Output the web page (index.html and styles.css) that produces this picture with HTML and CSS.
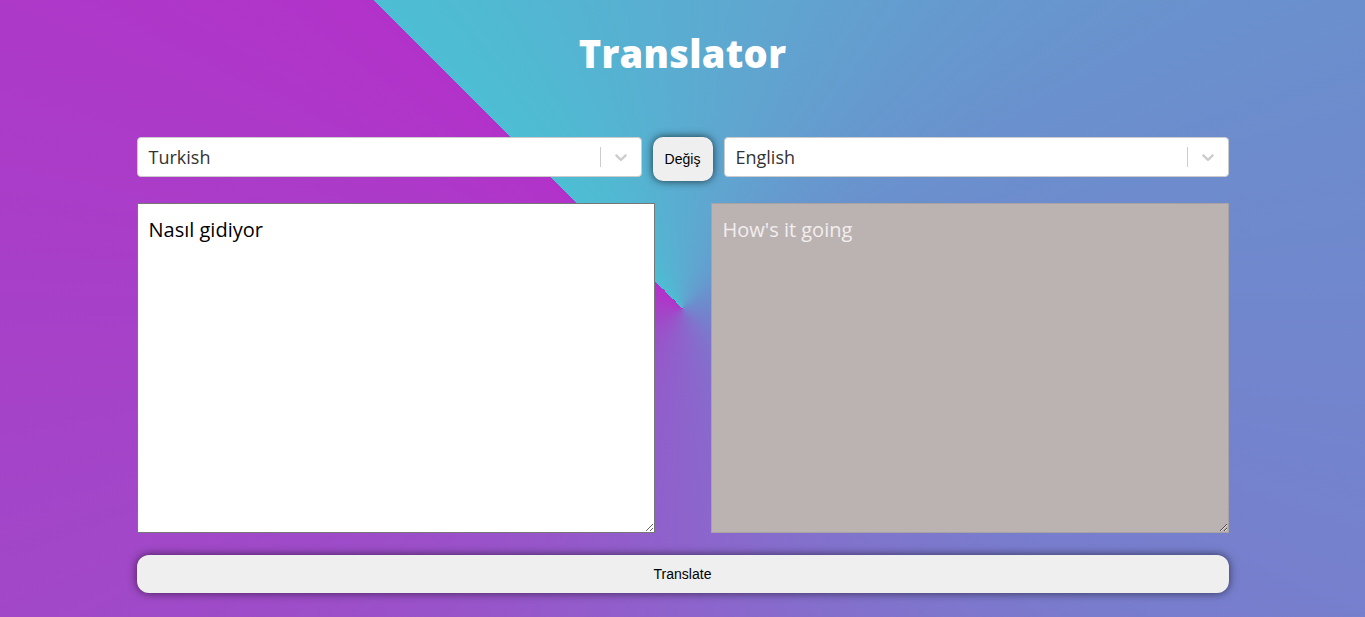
FILE: index.html
```html
<!DOCTYPE html>
<html lang="tr">
<head>
<meta charset="utf-8">
<title>Translator</title>
<link rel="stylesheet" href="styles.css">
</head>
<body>
<main class="app">
  <h1 class="title">Translator</h1>
  <div class="lang-row">
    <div class="select">
      <span class="select-value">Turkish</span>
      <span class="select-indicators">
        <span class="select-sep"></span>
        <svg class="chev" width="20" height="20" viewBox="0 0 20 20"><path d="M4.516 7.548c0.436-0.446 1.043-0.481 1.576 0l3.908 3.747 3.908-3.747c0.533-0.481 1.141-0.446 1.574 0 0.436 0.445 0.408 1.197 0 1.615-0.406 0.418-4.695 4.502-4.695 4.502-0.217 0.223-0.502 0.335-0.787 0.335s-0.57-0.112-0.789-0.335c0 0-4.287-4.084-4.695-4.502s-0.436-1.17 0-1.615z" fill="#cccccc"/></svg>
      </span>
    </div>
    <button class="swap">Değiş</button>
    <div class="select">
      <span class="select-value">English</span>
      <span class="select-indicators">
        <span class="select-sep"></span>
        <svg class="chev" width="20" height="20" viewBox="0 0 20 20"><path d="M4.516 7.548c0.436-0.446 1.043-0.481 1.576 0l3.908 3.747 3.908-3.747c0.533-0.481 1.141-0.446 1.574 0 0.436 0.445 0.408 1.197 0 1.615-0.406 0.418-4.695 4.502-4.695 4.502-0.217 0.223-0.502 0.335-0.787 0.335s-0.57-0.112-0.789-0.335c0 0-4.287-4.084-4.695-4.502s-0.436-1.17 0-1.615z" fill="#cccccc"/></svg>
      </span>
    </div>
  </div>
  <div class="text-row">
    <textarea class="box box-in">Nasıl gidiyor</textarea>
    <textarea class="box box-out" readonly>How's it going</textarea>
  </div>
  <button class="translate">Translate</button>
</main>
</body>
</html>
```
FILE: styles.css
```css
html, body {
  margin: 0;
  padding: 0;
  height: 100%;
}
body {
  background: conic-gradient(from 315deg at 50% 50%, #4dbed3 0deg, #5fa6d0 60deg, #6b8fcd 110deg, #797ccd 170deg, #8c65cc 220deg, #a148c8 290deg, #b232c9 360deg);
  font-family: "Open Sans", "Liberation Sans", sans-serif;
  overflow: hidden;
}
.app {
  width: 1092px;
  margin: 0 auto;
  display: flex;
  flex-direction: column;
  padding-top: 29px;
}
.title {
  margin: 0;
  text-align: center;
  color: #fff;
  font-family: "Open Sans", sans-serif;
  font-weight: 800;
  font-size: 38px;
  line-height: 48px;
  letter-spacing: 0.3px;
}
.lang-row {
  display: flex;
  align-items: flex-start;
  gap: 11px;
  margin-top: 60px;
}
.select {
  flex: 1 1 0;
  box-sizing: border-box;
  height: 40px;
  background: #fff;
  border: 1px solid #cccccc;
  border-radius: 4px;
  display: flex;
  align-items: center;
  justify-content: space-between;
  padding-left: 11px;
}
.select-value {
  font-size: 18px;
  color: #333;
  font-weight: 400;
}
.select-indicators {
  display: flex;
  align-items: center;
  height: 100%;
}
.select-sep {
  width: 1px;
  height: 20px;
  background: #cccccc;
}
.chev {
  padding: 0 10px;
}
.swap {
  flex: none;
  width: 60px;
  height: 44px;
  border: none;
  border-radius: 10px;
  background: #efefef;
  font-family: "Liberation Sans", Arial, sans-serif;
  font-size: 14px;
  color: #000;
  box-shadow: 0 0 8px rgba(0, 0, 0, 0.7);
}
.text-row {
  display: flex;
  justify-content: space-between;
  margin-top: 22px;
}
.box {
  width: 518px;
  height: 330px;
  box-sizing: border-box;
  margin: 0;
  border: 1px solid #767676;
  padding: 12px 11px 11px;
  font-family: "Open Sans", sans-serif;
  font-size: 20px;
  line-height: 28px;
  resize: both;
}
.box-in {
  background: #fff;
  color: #000;
}
.box-out {
  background: #bbb3b2;
  color: #f2eeee;
  border-color: #a9a2a2;
}
.translate {
  margin-top: 22px;
  height: 38px;
  border: none;
  border-radius: 12px;
  background: #efefef;
  font-family: "Liberation Sans", Arial, sans-serif;
  font-size: 14px;
  color: #000;
  box-shadow: 0 0 10px rgba(0, 0, 0, 0.6);
}
```
